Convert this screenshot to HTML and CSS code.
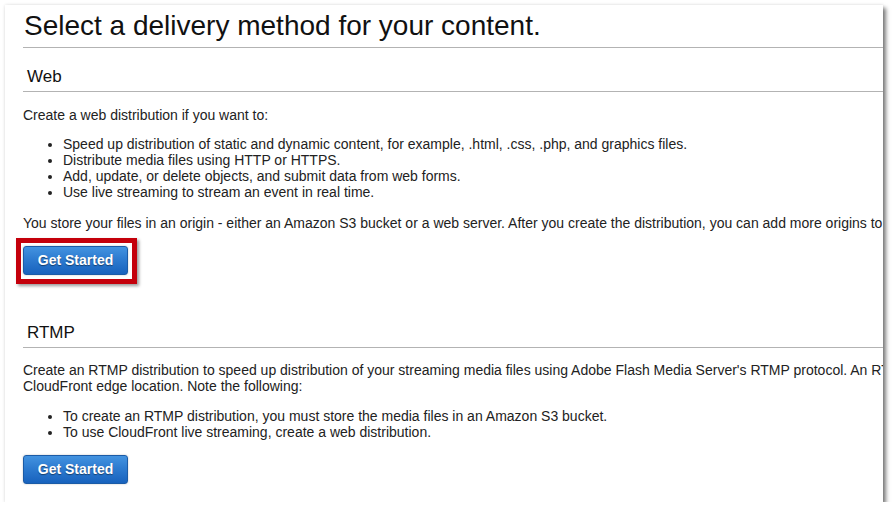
FILE: index.html
```html
<!DOCTYPE html>
<html>
<head>
<meta charset="utf-8">
<link rel="stylesheet" href="styles.css">
</head>
<body>
<div class="card">
  <h1 class="title">Select a delivery method for your content.</h1>

  <section class="method">
    <h2 class="method-head">Web</h2>
    <p class="text">Create a web distribution if you want to:</p>
    <ul class="list">
      <li>Speed up distribution of static and dynamic content, for example, .html, .css, .php, and graphics files.</li>
      <li>Distribute media files using HTTP or HTTPS.</li>
      <li>Add, update, or delete objects, and submit data from web forms.</li>
      <li>Use live streaming to stream an event in real time.</li>
    </ul>
    <p class="text nowrap">You store your files in an origin - either an Amazon S3 bucket or a web server. After you create the distribution, you can add more origins to the distribution.</p>
    <div class="btn-wrap highlighted">
      <button class="btn">Get Started</button>
      <span class="frame"></span>
    </div>
  </section>

  <section class="method rtmp">
    <h2 class="method-head">RTMP</h2>
    <p class="text nowrap">Create an RTMP distribution to speed up distribution of your streaming media files using Adobe Flash Media Server's RTMP protocol. An RTMP distribution allows an end user to begin playing a media file before the file has finished downloading from a<br>CloudFront edge location. Note the following:</p>
    <ul class="list">
      <li>To create an RTMP distribution, you must store the media files in an Amazon S3 bucket.</li>
      <li>To use CloudFront live streaming, create a web distribution.</li>
    </ul>
    <div class="btn-wrap">
      <button class="btn">Get Started</button>
    </div>
  </section>
</div>
</body>
</html>
```

FILE: styles.css
```css
html, body {
  margin: 0;
  padding: 0;
  background: #ffffff;
}

body {
  font-family: "Liberation Sans", Arial, sans-serif;
  color: #222222;
  font-size: 14px;
  line-height: 16px;
}

.card {
  margin: 5px 0 0 5px;
  width: 878px;
  height: 497px;
  background: #ffffff;
  overflow: hidden;
  box-shadow: 3px 3px 4px rgba(0, 0, 0, 0.5), 0 0 3px rgba(0, 0, 0, 0.12);
  padding-left: 18px;
  box-sizing: border-box;
}

.title {
  margin: 0;
  padding: 4px 0 4px 1px;
  font-size: 28px;
  line-height: 34px;
  font-weight: normal;
  color: #111111;
  border-bottom: 1px solid #b3b3b3;
}

.method-head {
  margin: 18px 0 0 0;
  padding: 0 0 3px 4px;
  font-size: 17px;
  line-height: 22px;
  font-weight: normal;
  color: #111111;
  border-bottom: 1px solid #b3b3b3;
}

.rtmp .method-head {
  margin-top: 47px;
}

.text {
  margin: 15px 0 0 0;
}

.rtmp .text {
  margin-top: 14px;
}

.nowrap {
  white-space: nowrap;
}

.list {
  margin: 13px 0 0 0;
  padding-left: 40px;
}

.rtmp .list {
  margin-top: 14px;
}

.btn-wrap {
  position: relative;
  display: inline-block;
  margin-top: 15px;
  vertical-align: top;
}

.rtmp .btn-wrap {
  margin-top: 15px;
}

.btn {
  display: block;
  margin: 0;
  width: 105px;
  height: 29px;
  padding: 0;
  font-family: "Liberation Sans", Arial, sans-serif;
  font-size: 14px;
  font-weight: bold;
  line-height: 17px;
  color: #ffffff;
  text-shadow: 0 1px 1px rgba(0, 0, 0, 0.45);
  background: linear-gradient(to bottom, #4393e0 0%, #2d7bd0 45%, #1862bd 100%);
  border: 1px solid #1b5ba6;
  border-radius: 3px;
  box-shadow: 0 0 2px rgba(0, 0, 0, 0.25);
}

.frame {
  position: absolute;
  left: -7px;
  top: -8px;
  right: -9px;
  bottom: -9px;
  border: 5px solid #c4000b;
  box-shadow: 2px 2px 3px rgba(0, 0, 0, 0.4);
  pointer-events: none;
}
```
